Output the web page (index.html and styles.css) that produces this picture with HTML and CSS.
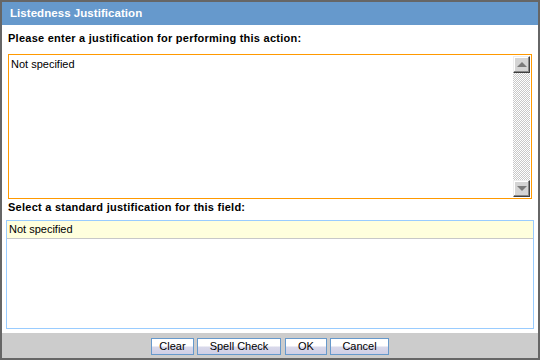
FILE: index.html
```html
<!DOCTYPE html>
<html>
<head>
<meta charset="utf-8">
<link rel="stylesheet" href="styles.css">
</head>
<body>
<div class="dialog">
  <div class="titlebar">Listedness Justification</div>
  <div class="content">
    <div class="label label-first">Please enter a justification for performing this action:</div>
    <div class="memo">
      <div class="memo-text">Not specified</div>
      <div class="scrollbar">
        <div class="sb-btn"><span class="arrow-up"></span></div>
        <div class="sb-track"></div>
        <div class="sb-btn"><span class="arrow-down"></span></div>
      </div>
    </div>
    <div class="label label-second">Select a standard justification for this field:</div>
    <div class="listbox">
      <div class="list-row">Not specified</div>
    </div>
  </div>
  <div class="footer">
    <button class="btn btn-clear">Clear</button>
    <button class="btn btn-spell">Spell Check</button>
    <button class="btn btn-ok">OK</button>
    <button class="btn btn-cancel">Cancel</button>
  </div>
</div>
</body>
</html>
```
FILE: styles.css
```css
* { box-sizing: border-box; }
html, body { margin: 0; padding: 0; background: #fff; }
body { font-family: "Liberation Sans", Arial, sans-serif; font-size: 11px; color: #000; }

.dialog {
  width: 540px;
  height: 360px;
  border: 2px solid #666;
  display: flex;
  flex-direction: column;
  background: #fff;
}

.titlebar {
  height: 23px;
  line-height: 23px;
  background: #6699cc;
  color: #fff;
  font-weight: bold;
  font-size: 11.5px;
  letter-spacing: 0.05px;
  padding-left: 8px;
}

.content {
  flex: 1;
  display: flex;
  flex-direction: column;
}

.label {
  font-weight: bold;
  font-size: 11px;
  letter-spacing: 0.25px;
  line-height: 14px;
  height: 14px;
  padding-left: 6px;
}
.label-first { margin-top: 6px; }
.label-second { margin-top: 1px; }

.memo {
  margin: 9px 6px 0 6px;
  height: 145px;
  border: 1px solid #ff9900;
  display: flex;
}
.memo-text {
  flex: 1;
  padding: 3px 2px;
  line-height: 13px;
}

.scrollbar {
  width: 17px;
  margin: 1px 1px 1px 0;
  display: flex;
  flex-direction: column;
}
.sb-btn {
  height: 17px;
  background: #d4d4d4;
  border: 1px solid;
  border-color: #eeeeee #404040 #404040 #eeeeee;
  box-shadow: inset -1px -1px 0 #888, inset 1px 1px 0 #fff;
  display: flex;
  align-items: center;
  justify-content: center;
}
.sb-track {
  flex: 1;
  background: repeating-conic-gradient(#c8c8c8 0 25%, #fff 0 50%) 0 0 / 2px 2px;
}
.arrow-up {
  width: 0; height: 0;
  border-left: 5px solid transparent;
  border-right: 5px solid transparent;
  border-bottom: 5px solid #7a7a7a;
}
.arrow-down {
  width: 0; height: 0;
  border-left: 5px solid transparent;
  border-right: 5px solid transparent;
  border-top: 5px solid #7a7a7a;
}

.listbox {
  margin: 6px 4px 0 4px;
  height: 109px;
  border: 1px solid #99ccff;
}
.list-row {
  height: 18px;
  line-height: 17px;
  background: #ffffdd;
  border-bottom: 1px solid #c8c8c8;
  padding-left: 2px;
}

.footer {
  height: 25px;
  margin-top: 4px;
  background: #cccccc;
  display: flex;
  justify-content: center;
  align-items: flex-start;
  padding-top: 5px;
  gap: 3px;
}
.btn {
  height: 17px;
  padding: 0;
  margin: 0;
  font-family: "Liberation Sans", Arial, sans-serif;
  font-size: 11px;
  color: #000;
  border: 1px solid #6699cc;
  background: linear-gradient(#ffffff 0, #ffffff 45%, #d8d8ea 55%, #cfcfe6 100%);
  line-height: 15px;
}
.btn-clear { width: 43px; }
.btn-spell { width: 84px; margin-left: 0; }
.btn-ok { width: 42px; margin-left: 1px; }
.btn-cancel { width: 59px; }
```
